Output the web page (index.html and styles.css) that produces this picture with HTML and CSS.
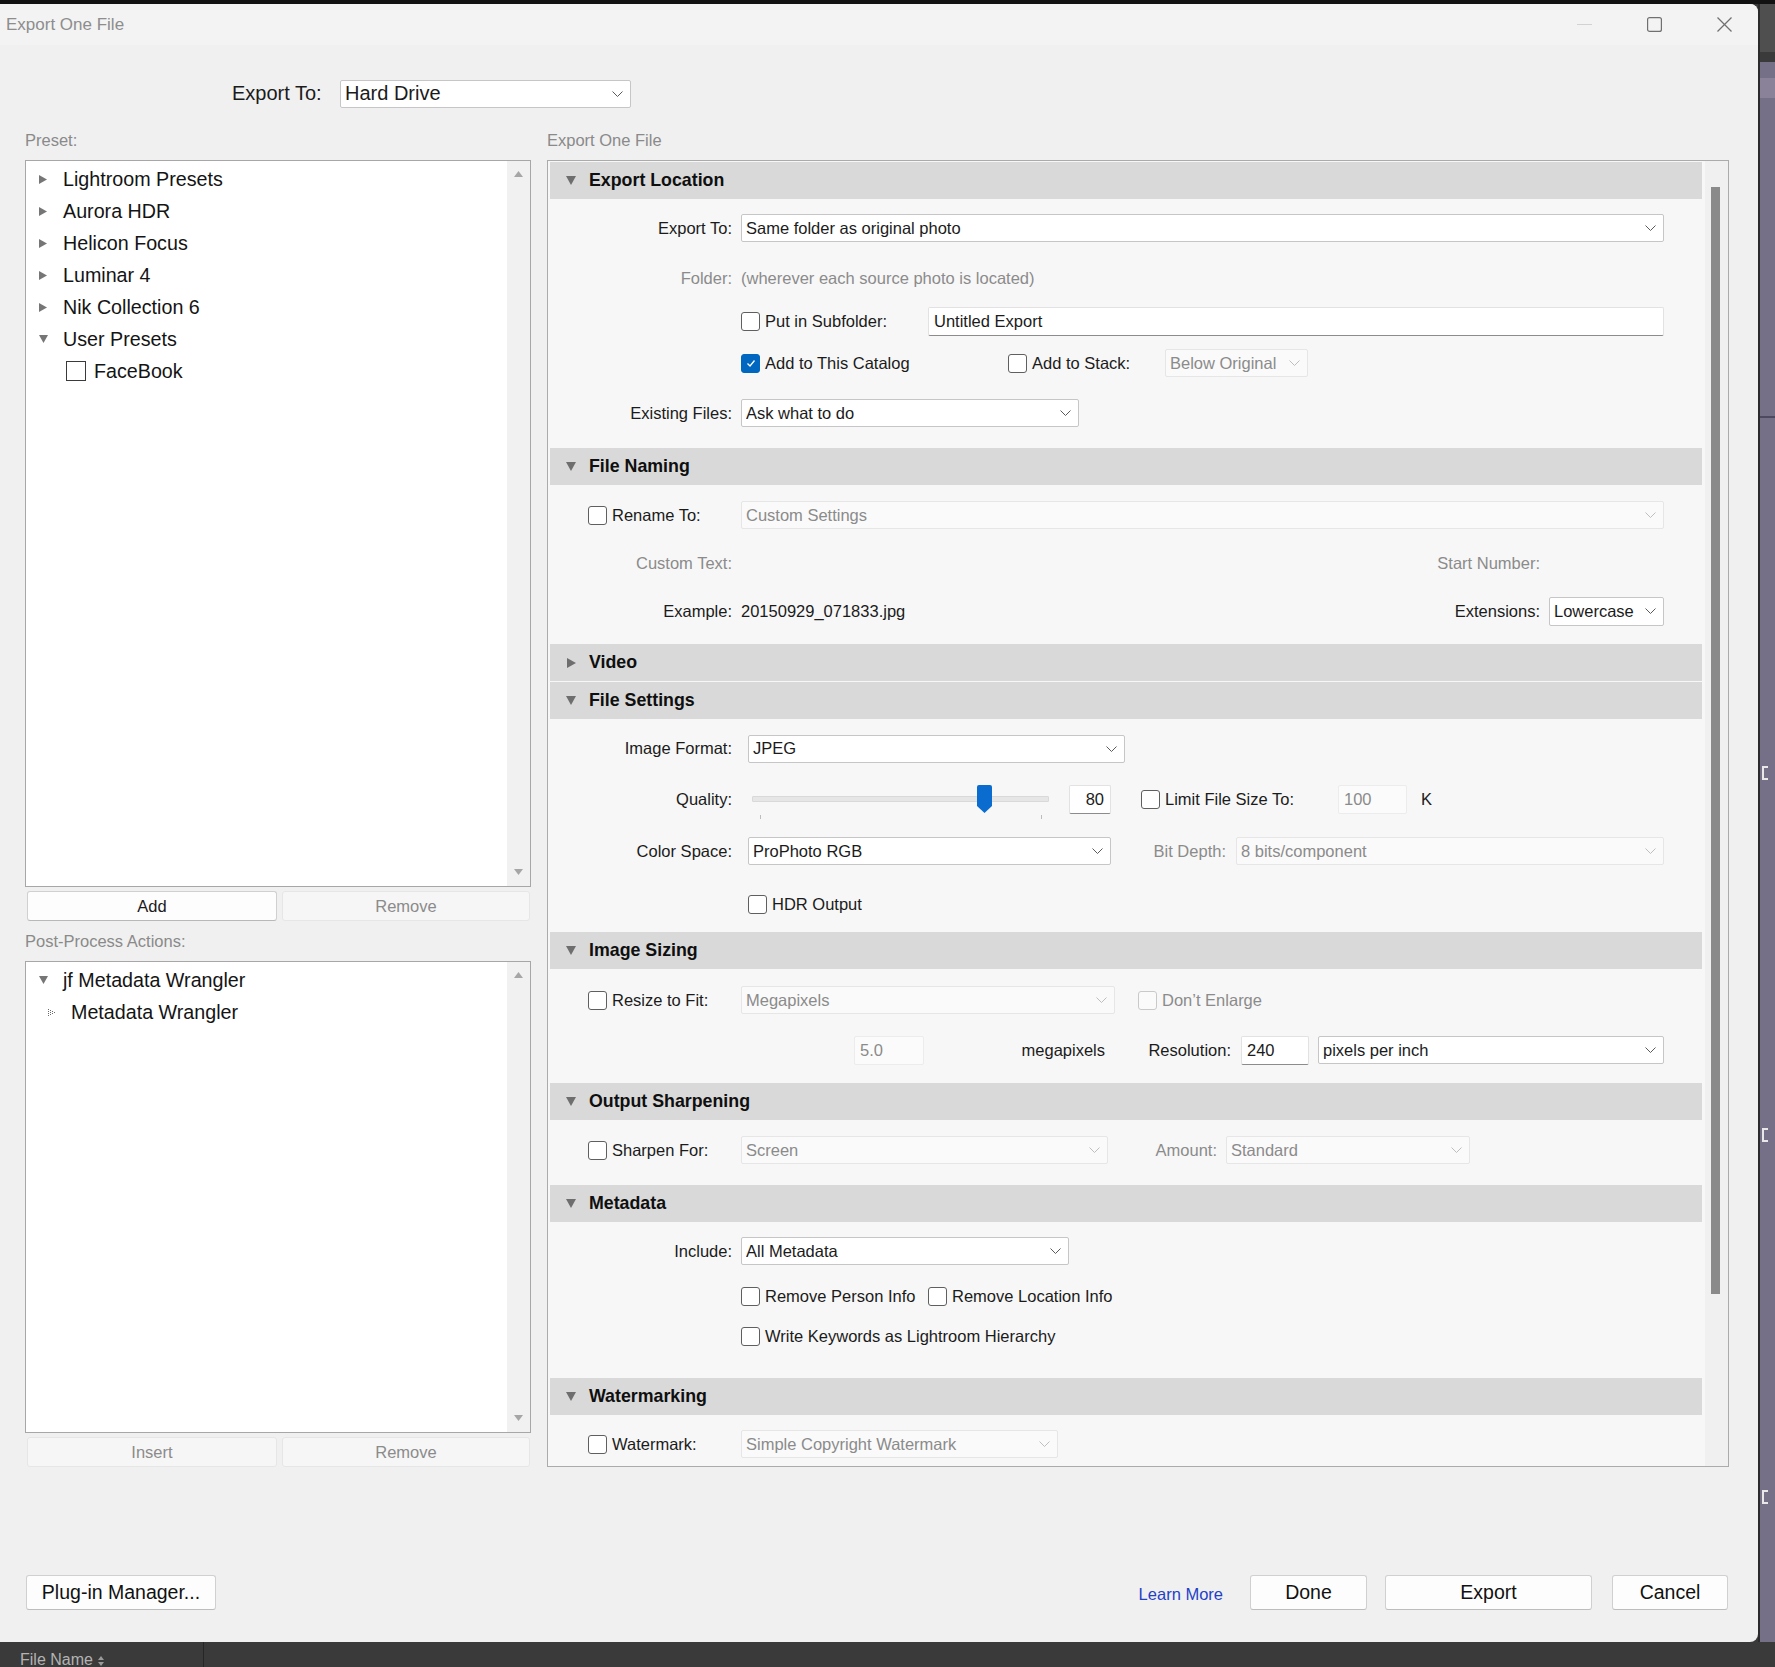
FILE: index.html
```html
<!DOCTYPE html>
<html lang="en">
<head>
<meta charset="utf-8">
<title>Export One File</title>
<link rel="stylesheet" href="styles.css">
</head>
<body>
<div class="screen">
  <div class="top-edge"></div>
  <div class="middle">
    <div class="window">
      <div class="titlebar">
        <span class="title">Export One File</span>
        <div class="win-controls">
          <svg class="wc wc-min" viewBox="0 0 15 15"><line x1="0" y1="7.5" x2="15" y2="7.5"/></svg>
          <svg class="wc" viewBox="0 0 15 15"><rect x="0.6" y="0.6" width="13.8" height="13.8" rx="2"/></svg>
          <svg class="wc" viewBox="0 0 15 15"><line x1="0.5" y1="0.5" x2="14.5" y2="14.5"/><line x1="14.5" y1="0.5" x2="0.5" y2="14.5"/></svg>
        </div>
      </div>

      <div class="export-dest">
        <span class="big-label">Export To:</span>
        <div class="dd dd-hard"><span>Hard Drive</span><svg class="chev" viewBox="0 0 11 6"><polyline points="0.5,0.5 5.5,5.5 10.5,0.5"/></svg></div>
      </div>

      <div class="columns">
        <div class="left-col">
          <div class="caption">Preset:</div>
          <div class="tree-box tree-presets">
            <div class="tree-list">
              <div class="tree-item"><span class="tri-cell"><svg class="ttri" viewBox="0 0 8 9"><polygon points="0,0 8,4.5 0,9"/></svg></span>Lightroom Presets</div>
              <div class="tree-item"><span class="tri-cell"><svg class="ttri" viewBox="0 0 8 9"><polygon points="0,0 8,4.5 0,9"/></svg></span>Aurora HDR</div>
              <div class="tree-item"><span class="tri-cell"><svg class="ttri" viewBox="0 0 8 9"><polygon points="0,0 8,4.5 0,9"/></svg></span>Helicon Focus</div>
              <div class="tree-item"><span class="tri-cell"><svg class="ttri" viewBox="0 0 8 9"><polygon points="0,0 8,4.5 0,9"/></svg></span>Luminar 4</div>
              <div class="tree-item"><span class="tri-cell"><svg class="ttri" viewBox="0 0 8 9"><polygon points="0,0 8,4.5 0,9"/></svg></span>Nik Collection 6</div>
              <div class="tree-item"><span class="tri-cell"><svg class="ttri-d" viewBox="0 0 9 8"><polygon points="0,0 9,0 4.5,8"/></svg></span>User Presets</div>
              <div class="tree-item tree-child"><span class="tcb"></span>FaceBook</div>
            </div>
            <div class="tree-scroll">
              <svg class="sarrow" viewBox="0 0 9 6"><polygon points="0,6 4.5,0 9,6"/></svg>
              <svg class="sarrow" viewBox="0 0 9 6"><polygon points="0,0 9,0 4.5,6"/></svg>
            </div>
          </div>
          <div class="btn-pair">
            <div class="btn">Add</div>
            <div class="btn disabled">Remove</div>
          </div>
          <div class="caption caption-post">Post-Process Actions:</div>
          <div class="tree-box tree-post">
            <div class="tree-list">
              <div class="tree-item"><span class="tri-cell"><svg class="ttri-d" viewBox="0 0 9 8"><polygon points="0,0 9,0 4.5,8"/></svg></span>jf Metadata Wrangler</div>
              <div class="tree-item"><span class="tri-cell tri-sub"><svg class="dots" viewBox="0 0 7 7"><rect x="0" y="0" width="1" height="1"/><rect x="0" y="2" width="1" height="1"/><rect x="0" y="4" width="1" height="1"/><rect x="0" y="6" width="1" height="1"/><rect x="2" y="1" width="1" height="1"/><rect x="2" y="3" width="1" height="1"/><rect x="2" y="5" width="1" height="1"/><rect x="4" y="2" width="1" height="1"/><rect x="4" y="4" width="1" height="1"/><rect x="6" y="3" width="1" height="1"/></svg></span>Metadata Wrangler</div>
            </div>
            <div class="tree-scroll">
              <svg class="sarrow" viewBox="0 0 9 6"><polygon points="0,6 4.5,0 9,6"/></svg>
              <svg class="sarrow" viewBox="0 0 9 6"><polygon points="0,0 9,0 4.5,6"/></svg>
            </div>
          </div>
          <div class="btn-pair">
            <div class="btn disabled">Insert</div>
            <div class="btn disabled">Remove</div>
          </div>
        </div>

        <div class="right-col">
          <div class="caption">Export One File</div>
          <div class="panel">
            <div class="panel-content">

              <div class="sec-head"><svg class="tri" viewBox="0 0 10 9"><polygon points="0,0 10,0 5,9"/></svg>Export Location</div>
              <div class="sec-body body-location">
                <div class="row">
                  <span class="lbl">Export To:</span>
                  <div class="dd grow"><span>Same folder as original photo</span><svg class="chev" viewBox="0 0 11 6"><polyline points="0.5,0.5 5.5,5.5 10.5,0.5"/></svg></div>
                </div>
                <div class="row">
                  <span class="lbl muted">Folder:</span>
                  <span class="muted">(wherever each source photo is located)</span>
                </div>
                <div class="row">
                  <span class="lbl"></span>
                  <div class="grp g-sub"><span class="cb"></span>Put in Subfolder:</div>
                  <div class="tin grow">Untitled Export</div>
                </div>
                <div class="row">
                  <span class="lbl"></span>
                  <div class="grp g-catalog"><span class="cb on"><svg class="tick" viewBox="0 0 12 12"><polyline points="2.5,6.5 5,9 9.5,3.5"/></svg></span>Add to This Catalog</div>
                  <div class="grp g-stack"><span class="cb"></span>Add to Stack:</div>
                  <div class="dd off w-below"><span>Below Original</span><svg class="chev" viewBox="0 0 11 6"><polyline points="0.5,0.5 5.5,5.5 10.5,0.5"/></svg></div>
                </div>
                <div class="row">
                  <span class="lbl">Existing Files:</span>
                  <div class="dd w-existing"><span>Ask what to do</span><svg class="chev" viewBox="0 0 11 6"><polyline points="0.5,0.5 5.5,5.5 10.5,0.5"/></svg></div>
                </div>
              </div>

              <div class="sec-head"><svg class="tri" viewBox="0 0 10 9"><polygon points="0,0 10,0 5,9"/></svg>File Naming</div>
              <div class="sec-body body-naming">
                <div class="row">
                  <span class="lbl lbl-left"><span class="cb"></span>Rename To:</span>
                  <div class="dd off grow"><span>Custom Settings</span><svg class="chev" viewBox="0 0 11 6"><polyline points="0.5,0.5 5.5,5.5 10.5,0.5"/></svg></div>
                </div>
                <div class="row">
                  <span class="lbl muted">Custom Text:</span>
                  <span class="muted start-num">Start Number:</span>
                </div>
                <div class="row">
                  <span class="lbl">Example:</span>
                  <span>20150929_071833.jpg</span>
                  <span class="ext-lbl">Extensions:</span>
                  <div class="dd w-ext"><span>Lowercase</span><svg class="chev" viewBox="0 0 11 6"><polyline points="0.5,0.5 5.5,5.5 10.5,0.5"/></svg></div>
                </div>
              </div>

              <div class="sec-head sec-video"><svg class="tri tri-r" viewBox="0 0 9 10"><polygon points="0,0 9,5 0,10"/></svg>Video</div>

              <div class="sec-head"><svg class="tri" viewBox="0 0 10 9"><polygon points="0,0 10,0 5,9"/></svg>File Settings</div>
              <div class="sec-body body-settings">
                <div class="row">
                  <span class="lbl">Image Format:</span>
                  <div class="dd w-format"><span>JPEG</span><svg class="chev" viewBox="0 0 11 6"><polyline points="0.5,0.5 5.5,5.5 10.5,0.5"/></svg></div>
                </div>
                <div class="row">
                  <span class="lbl">Quality:</span>
                  <div class="slider">
                    <div class="track"></div>
                    <span class="tick-mark tick-a"></span>
                    <span class="tick-mark tick-b"></span>
                    <svg class="thumb" viewBox="0 0 15 28"><path d="M2,0 H13 Q15,0 15,2 V21 L7.5,28 L0,21 V2 Q0,0 2,0 Z"/></svg>
                  </div>
                  <div class="tin val">80</div>
                  <div class="grp g-limit"><span class="cb"></span>Limit File Size To:</div>
                  <div class="tin off w-size">100</div>
                  <span class="unit">K</span>
                </div>
                <div class="row">
                  <span class="lbl">Color Space:</span>
                  <div class="dd w-color"><span>ProPhoto RGB</span><svg class="chev" viewBox="0 0 11 6"><polyline points="0.5,0.5 5.5,5.5 10.5,0.5"/></svg></div>
                  <span class="muted cell-bit">Bit Depth:</span>
                  <div class="dd off grow"><span>8 bits/component</span><svg class="chev" viewBox="0 0 11 6"><polyline points="0.5,0.5 5.5,5.5 10.5,0.5"/></svg></div>
                </div>
                <div class="row">
                  <span class="lbl"></span>
                  <div class="grp"><span class="cb"></span>HDR Output</div>
                </div>
              </div>

              <div class="sec-head"><svg class="tri" viewBox="0 0 10 9"><polygon points="0,0 10,0 5,9"/></svg>Image Sizing</div>
              <div class="sec-body body-sizing">
                <div class="row">
                  <span class="lbl lbl-left"><span class="cb"></span>Resize to Fit:</span>
                  <div class="dd off w-mp"><span>Megapixels</span><svg class="chev" viewBox="0 0 11 6"><polyline points="0.5,0.5 5.5,5.5 10.5,0.5"/></svg></div>
                  <div class="grp g-enlarge"><span class="cb dis"></span><span class="muted">Don’t Enlarge</span></div>
                </div>
                <div class="row">
                  <span class="lbl"></span>
                  <div class="tin off box-mp">5.0</div>
                  <span class="cell-mp">megapixels</span>
                  <span class="cell-res">Resolution:</span>
                  <div class="tin w-res">240</div>
                  <div class="dd grow"><span>pixels per inch</span><svg class="chev" viewBox="0 0 11 6"><polyline points="0.5,0.5 5.5,5.5 10.5,0.5"/></svg></div>
                </div>
              </div>

              <div class="sec-head"><svg class="tri" viewBox="0 0 10 9"><polygon points="0,0 10,0 5,9"/></svg>Output Sharpening</div>
              <div class="sec-body body-sharpen">
                <div class="row">
                  <span class="lbl lbl-left"><span class="cb"></span>Sharpen For:</span>
                  <div class="dd off w-sharp"><span>Screen</span><svg class="chev" viewBox="0 0 11 6"><polyline points="0.5,0.5 5.5,5.5 10.5,0.5"/></svg></div>
                  <span class="muted cell-amount">Amount:</span>
                  <div class="dd off w-amount"><span>Standard</span><svg class="chev" viewBox="0 0 11 6"><polyline points="0.5,0.5 5.5,5.5 10.5,0.5"/></svg></div>
                </div>
              </div>

              <div class="sec-head"><svg class="tri" viewBox="0 0 10 9"><polygon points="0,0 10,0 5,9"/></svg>Metadata</div>
              <div class="sec-body body-meta">
                <div class="row">
                  <span class="lbl">Include:</span>
                  <div class="dd w-include"><span>All Metadata</span><svg class="chev" viewBox="0 0 11 6"><polyline points="0.5,0.5 5.5,5.5 10.5,0.5"/></svg></div>
                </div>
                <div class="row">
                  <span class="lbl"></span>
                  <div class="grp g-person"><span class="cb"></span>Remove Person Info</div>
                  <div class="grp"><span class="cb"></span>Remove Location Info</div>
                </div>
                <div class="row">
                  <span class="lbl"></span>
                  <div class="grp"><span class="cb"></span>Write Keywords as Lightroom Hierarchy</div>
                </div>
              </div>

              <div class="sec-head"><svg class="tri" viewBox="0 0 10 9"><polygon points="0,0 10,0 5,9"/></svg>Watermarking</div>
              <div class="sec-body body-water">
                <div class="row">
                  <span class="lbl lbl-left"><span class="cb"></span>Watermark:</span>
                  <div class="dd off w-water"><span>Simple Copyright Watermark</span><svg class="chev" viewBox="0 0 11 6"><polyline points="0.5,0.5 5.5,5.5 10.5,0.5"/></svg></div>
                </div>
              </div>

            </div>
            <div class="panel-scroll"><div class="thumb-bar"></div></div>
          </div>
        </div>
      </div>

      <div class="footer">
        <div class="fbtn btn-plugin">Plug-in Manager...</div>
        <span class="learn">Learn More</span>
        <div class="fbtn btn-done">Done</div>
        <div class="fbtn btn-export">Export</div>
        <div class="fbtn btn-cancel">Cancel</div>
      </div>
    </div>

    <div class="side">
      <div class="side-dark"></div>
      <div class="side-line"></div>
      <div class="side-band"></div>
      <div class="side-purple">
        <div class="side-sep"></div>
        <div class="side-mark"></div>
        <div class="side-mark"></div>
        <div class="side-mark"></div>
      </div>
    </div>
  </div>
  <div class="taskbar">
    <div class="tb-cell">File Name <svg class="sort" viewBox="0 0 6 10"><polygon points="0,4 3,0 6,4"/><polygon points="0,6 6,6 3,10"/></svg></div>
  </div>
</div>
</body>
</html>
```

FILE: styles.css
```css
* { box-sizing: border-box; }
html, body { margin: 0; padding: 0; }
body {
  width: 1775px;
  height: 1667px;
  overflow: hidden;
  background: #3a3a3a;
  font-family: "Liberation Sans", Arial, sans-serif;
  color: #1b1b1b;
}
.screen { width: 1775px; height: 1667px; display: flex; flex-direction: column; overflow: hidden; }
.top-edge { height: 4px; background: #121212; flex: none; }
.middle { height: 1638px; display: flex; flex: none; }

.window {
  width: 1758px;
  height: 1638px;
  flex: none;
  background: #f0f0f0;
  border-radius: 0 8px 8px 0;
  display: flex;
  flex-direction: column;
  overflow: hidden;
}

/* title bar */
.titlebar { height: 41px; flex: none; background: #f3f3f3; display: flex; align-items: center; padding-left: 6px; }
.title { font-size: 17px; color: #8d8d8d; }
.win-controls { margin-left: auto; margin-right: 26px; display: flex; align-items: center; gap: 55px; }
.wc { width: 15px; height: 15px; fill: none; stroke: #707070; stroke-width: 1.2; }
.wc-min { stroke: #d2d2d2; }

/* export destination */
.export-dest { margin-top: 33px; height: 31px; flex: none; display: flex; align-items: center; padding-left: 232px; }
.big-label { font-size: 20px; width: 108px; }
.dd-hard { width: 291px; height: 31px; font-size: 20px; padding-left: 5px; padding-right: 9px; }

/* columns */
.columns { margin-top: 21px; height: 1337px; flex: none; display: flex; padding-left: 25px; }
.left-col { width: 506px; flex: none; display: flex; flex-direction: column; }
.right-col { width: 1182px; flex: none; margin-left: 16px; display: flex; flex-direction: column; }
.caption { height: 20px; line-height: 20px; font-size: 16.5px; color: #8a8a8a; margin-bottom: 10px; flex: none; }
.caption-post { margin-top: 10px; }

/* trees */
.tree-box { border: 1px solid #a7a7a7; background: #fff; display: flex; flex: none; }
.tree-presets { height: 727px; }
.tree-post { height: 472px; }
.tree-list { flex: 1; padding: 2px 0 0 13px; }
.tree-item { height: 32px; display: flex; align-items: center; font-size: 19.7px; color: #141414; white-space: nowrap; }
.tri-cell { width: 24px; flex: none; display: flex; align-items: center; }
.tri-sub { margin-left: 9px; width: 23px; }
.ttri { width: 8px; height: 9px; fill: #767676; }
.ttri-d { width: 9px; height: 8px; fill: #767676; }
.dots { width: 7px; height: 7px; fill: #6a6a6a; }
.tree-child { padding-left: 27px; }
.tcb { width: 20px; height: 20px; border: 1px solid #3a3a3a; background: #fff; margin-right: 8px; flex: none; }
.tree-scroll {
  width: 23px;
  flex: none;
  background: #f1f1f1;
  display: flex;
  flex-direction: column;
  justify-content: space-between;
  align-items: center;
  padding: 10px 0 11px;
}
.sarrow { width: 9px; height: 6px; fill: #a6a6a6; }

.btn-pair { margin-top: 4px; height: 30px; flex: none; display: grid; grid-template-columns: 250px 248px; gap: 5px; padding-left: 2px; }
.btn {
  border: 1px solid #d0d0d0;
  border-bottom-color: #b8b8b8;
  border-radius: 3px;
  background: #fdfdfd;
  font-size: 16.5px;
  display: flex;
  align-items: center;
  justify-content: center;
}
.btn.disabled { background: #f6f6f6; border-color: #e6e6e6; color: #8b8b8b; }

/* right panel */
.panel { height: 1307px; flex: none; border: 1px solid #ababab; background: #f7f7f7; display: flex; overflow: hidden; }
.panel-content { width: 1154px; flex: none; padding: 1px 0 0 2px; }
.panel-scroll { width: 23px; flex: none; margin-left: 3px; background: #f0f0f0; padding: 26px 0 0 6px; }
.thumb-bar { width: 9px; height: 1107px; background: #8a8a8a; }

.sec-head {
  height: 37px;
  background: #d9d9d9;
  display: flex;
  align-items: center;
  padding-left: 16px;
  font-weight: bold;
  font-size: 17.8px;
  color: #0f0f0f;
}
.tri { width: 10px; height: 9px; margin-right: 13px; fill: #6e6e6e; flex: none; }
.tri-r { width: 9px; height: 10px; margin-left: 1px; }
.sec-video { margin-bottom: 1px; }

.sec-body { display: grid; padding-left: 38px; padding-right: 38px; }
.body-location { padding-top: 5px; padding-bottom: 10px; grid-template-rows: 48px 52px 34px 50px 50px; }
.body-naming { padding-top: 6px; padding-bottom: 9px; grid-template-rows: 48px 48px 48px; }
.body-settings { padding-top: 5px; grid-template-rows: 49px 53px 50px 56px; }
.body-sizing { padding-top: 6px; padding-bottom: 8px; grid-template-rows: 50px 50px; }
.body-sharpen { padding-top: 5px; padding-bottom: 10px; grid-template-rows: 50px; }
.body-meta { padding-top: 5px; padding-bottom: 23px; grid-template-rows: 48px 42px 38px; }
.body-water { padding-top: 5px; grid-template-rows: 48px; }

.row { display: flex; align-items: center; font-size: 16.5px; white-space: nowrap; min-width: 0; }
.lbl { width: 144px; flex: none; text-align: right; margin-right: 9px; }
.body-settings .lbl { margin-right: 16px; }
.lbl-left { text-align: left; display: flex; align-items: center; }
.muted { color: #8b8b8b; }
.grow { flex: 1; min-width: 0; }
.grp { display: flex; align-items: center; flex: none; }

/* dropdowns */
.dd {
  height: 28px;
  flex: none;
  background: #fff;
  border: 1px solid #c6c6c6;
  border-radius: 2px;
  display: flex;
  align-items: center;
  padding: 0 7px 0 4px;
}
.dd.grow { flex: 1; }
.dd span { flex: 1; overflow: hidden; white-space: nowrap; }
.chev { width: 11px; height: 6px; fill: none; stroke: #5a5a5a; stroke-width: 1; flex: none; }
.dd.off { background: #fafafa; border-color: #e6e6e6; color: #8b8b8b; }
.dd.off .chev { stroke: #bebebe; }

/* checkboxes */
.cb {
  width: 19px;
  height: 19px;
  flex: none;
  border: 1px solid #5f5f5f;
  border-radius: 3px;
  background: #fff;
  margin-right: 5px;
  display: flex;
  align-items: center;
  justify-content: center;
}
.cb.on { background: #0067c0; border-color: #0067c0; }
.cb.dis { border-color: #c9c9c9; background: #fafafa; }
.tick { width: 12px; height: 12px; fill: none; stroke: #fff; stroke-width: 1.3; }

/* text inputs */
.tin {
  height: 29px;
  flex: none;
  background: #fff;
  border: 1px solid #e2e2e2;
  border-bottom-color: #8c8c8c;
  border-radius: 2px;
  display: flex;
  align-items: center;
  padding-left: 5px;
}
.tin.grow { flex: 1; }
.tin.off { background: #fbfbfb; border-color: #ececec; color: #8b8b8b; }

/* widths */
.g-sub { width: 187px; }
.g-catalog { width: 267px; }
.g-stack { width: 157px; }
.w-below { width: 143px; }
.w-existing { width: 338px; }
.start-num { margin-left: auto; margin-right: 124px; }
.ext-lbl { margin-left: auto; margin-right: 9px; }
.w-ext { width: 115px; height: 29px; }
.w-format { width: 377px; }
.w-color { width: 363px; }
.cell-bit { width: 125px; flex: none; text-align: right; padding-right: 10px; }
.w-mp { width: 374px; }
.g-enlarge { margin-left: 23px; }
.box-mp { width: 70px; margin-left: 113px; }
.cell-mp { width: 181px; flex: none; text-align: right; }
.cell-res { width: 126px; flex: none; text-align: right; margin-right: 10px; }
.w-res { width: 68px; margin-right: 9px; }
.w-sharp { width: 367px; }
.cell-amount { width: 118px; flex: none; text-align: right; padding-right: 9px; }
.w-amount { width: 244px; }
.w-include { width: 328px; }
.g-person { width: 187px; }
.w-water { width: 317px; }

/* slider */
.slider { width: 317px; height: 36px; flex: none; margin-left: 4px; position: relative; }
.track { position: absolute; left: 0; top: 14px; width: 297px; height: 6px; background: #e6e6e6; border: 1px solid #d9d9d9; border-radius: 1px; }
.tick-mark { position: absolute; top: 33px; width: 1px; height: 4px; background: #bdbdbd; }
.tick-a { left: 8px; }
.tick-b { left: 289px; }
.thumb { position: absolute; left: 225px; top: 3px; width: 15px; height: 28px; fill: #0a6ccf; }
.val { width: 42px; justify-content: flex-end; padding-left: 0; padding-right: 6px; margin-right: 30px; }
.g-limit { width: 197px; }
.w-size { width: 69px; margin-right: 14px; }

/* footer */
.footer { margin-top: 108px; height: 35px; flex: none; display: flex; align-items: center; padding-left: 26px; padding-right: 30px; }
.fbtn {
  height: 35px;
  flex: none;
  font-size: 19.5px;
  border: 1px solid #d0d0d0;
  border-bottom-color: #bdbdbd;
  border-radius: 3px;
  background: #fdfdfd;
  display: flex;
  align-items: center;
  justify-content: center;
  color: #111;
}
.btn-plugin { width: 190px; }
.learn { margin-left: auto; margin-right: 27px; color: #2340c8; font-size: 16.5px; padding-top: 4px; }
.btn-done { width: 117px; margin-right: 18px; }
.btn-export { width: 207px; margin-right: 20px; }
.btn-cancel { width: 116px; }

/* background beyond window */
.side { flex: 1; display: flex; flex-direction: column; background: #766f88; border-left: 2px solid #2b2b2b; }
.side-dark { height: 48px; background: #4f4f4f; flex: none; }
.side-line { height: 10px; background: #3a3a3a; flex: none; }
.side-band { height: 20px; margin-top: 16px; background: #8a8299; flex: none; }
.side-purple { flex: 1; display: flex; flex-direction: column; }
.side-sep { height: 2px; background: #4e4860; margin-top: 318px; }
.side-mark { width: 6px; height: 14px; border: 2px solid #e8e8e8; border-right: none; margin-left: 2px; margin-top: 348px; }
.side-mark:first-of-type { margin-top: 359px; }

/* bottom strip */
.taskbar { flex: 1; background: #3a3a3a; display: flex; }
.tb-cell { width: 204px; border-right: 1px solid #262626; padding: 9px 0 0 20px; font-size: 16px; line-height: 18px; color: #b3b3b3; display: flex; align-items: flex-start; gap: 5px; }
.sort { width: 6px; height: 10px; fill: #9a9a9a; margin-top: 5px; }
```
